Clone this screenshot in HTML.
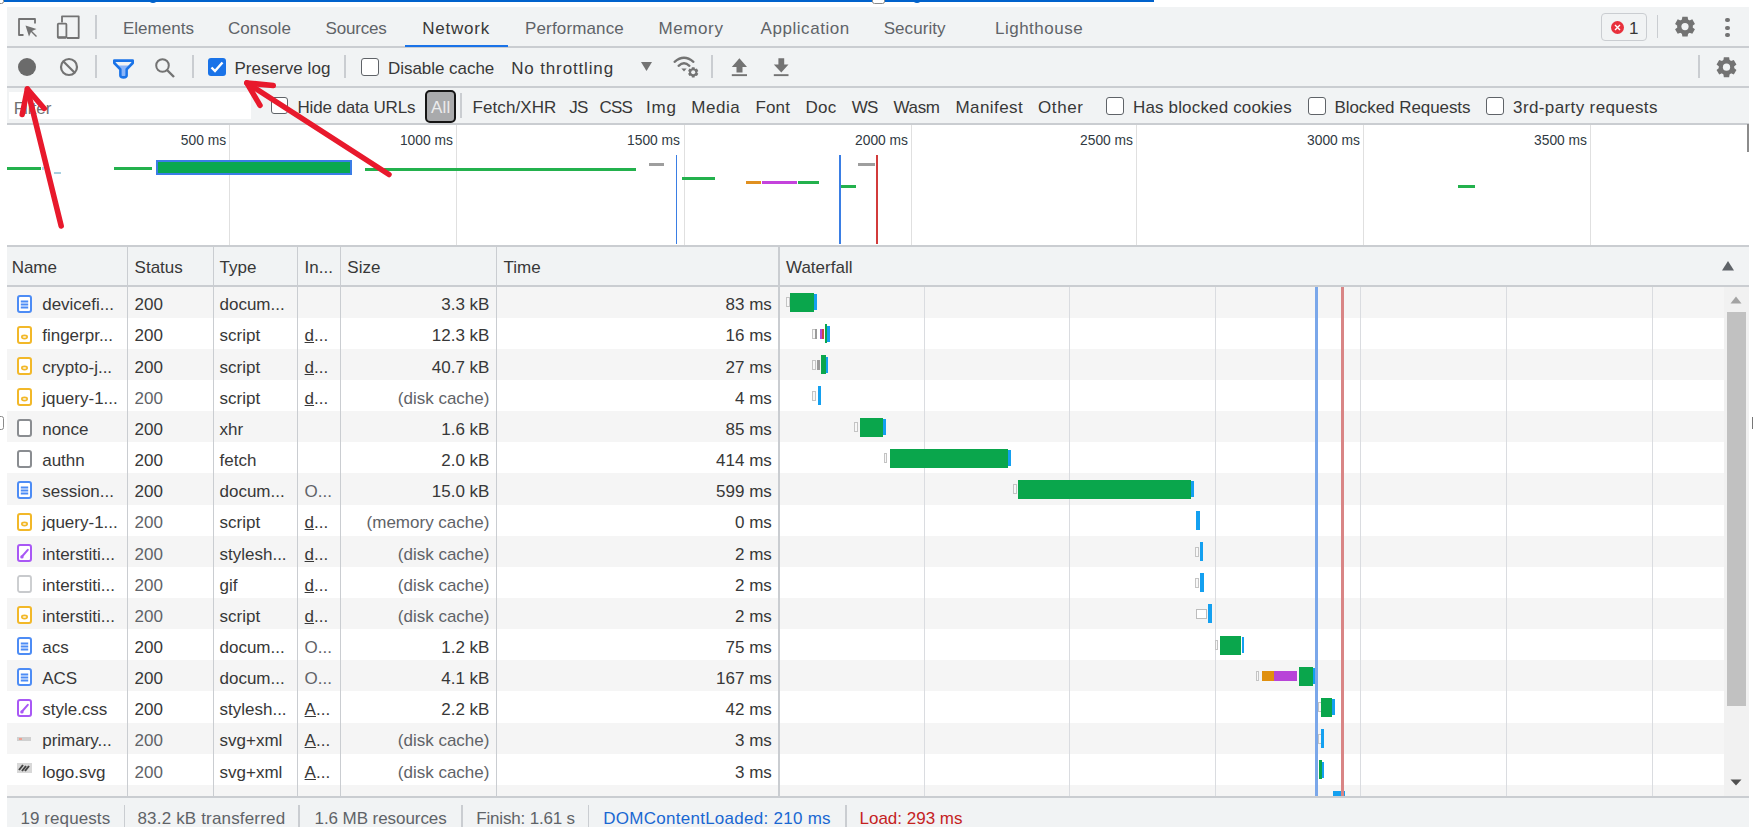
<!DOCTYPE html>
<html><head><meta charset="utf-8"><style>
html,body{margin:0;padding:0;background:#fff;width:1753px;height:827px;overflow:hidden;position:relative;font-family:"Liberation Sans", sans-serif;}
body>div{position:absolute;}
.t{white-space:nowrap;}
</style></head><body>
<div style="left:3.80px;top:0.00px;width:1150.00px;height:1.90px;background:#0062cc;"></div>
<div style="left:149.2px;top:-4px;width:8.2px;height:6.9px;border-radius:0 0 4px 4px;background:#0062cc"></div>
<div style="left:912.6px;top:-4px;width:8.5px;height:7px;border-radius:0 0 4px 4px;background:#0062cc"></div>
<div style="left:-6px;top:-6px;width:9.5px;height:9.5px;box-sizing:border-box;border:1.8px solid #8a8a8a;border-radius:2.5px;background:#fff"></div>
<div style="left:871.5px;top:-5px;width:13px;height:8.6px;box-sizing:border-box;border:1.8px solid #8a8a8a;border-radius:2.5px;background:#fff"></div>
<div style="left:-6px;top:416px;width:9.7px;height:13.6px;box-sizing:border-box;border:1.8px solid #8a8a8a;border-radius:2.5px;background:#fff"></div>
<div style="left:1752px;top:417px;width:3px;height:12px;background:#777"></div>
<div style="left:7.00px;top:7.00px;width:1742.00px;height:820.00px;background:#ffffff;"></div>
<div style="left:7.00px;top:7.00px;width:1742.00px;height:40.00px;background:#f1f3f4;"></div>
<div style="left:7.00px;top:46.00px;width:1742.00px;height:1.50px;background:#cacdd1;"></div>
<div style="left:7.00px;top:47.50px;width:1742.00px;height:39.00px;background:#f1f3f4;"></div>
<div style="left:7.00px;top:86.00px;width:1742.00px;height:1.50px;background:#cacdd1;"></div>
<div style="left:7.00px;top:87.50px;width:1742.00px;height:36.00px;background:#f1f3f4;"></div>
<div style="left:7.00px;top:123.00px;width:1742.00px;height:1.50px;background:#cacdd1;"></div>
<div style="left:229.20px;top:124.50px;width:1.00px;height:120.50px;background:#e0e0e0;"></div>
<div style="left:456.20px;top:124.50px;width:1.00px;height:120.50px;background:#e0e0e0;"></div>
<div style="left:683.50px;top:124.50px;width:1.00px;height:120.50px;background:#e0e0e0;"></div>
<div style="left:910.50px;top:124.50px;width:1.00px;height:120.50px;background:#e0e0e0;"></div>
<div style="left:1136.00px;top:124.50px;width:1.00px;height:120.50px;background:#e0e0e0;"></div>
<div style="left:1363.00px;top:124.50px;width:1.00px;height:120.50px;background:#e0e0e0;"></div>
<div style="left:1590.00px;top:124.50px;width:1.00px;height:120.50px;background:#e0e0e0;"></div>
<div style="left:7.00px;top:245.00px;width:1742.00px;height:1.50px;background:#cacdd1;"></div>
<div style="left:1747.40px;top:124.00px;width:1.70px;height:27.50px;background:#8c8c8c;"></div>
<div style="left:7.00px;top:246.50px;width:1742.00px;height:39.50px;background:#f1f3f4;"></div>
<div style="left:7.00px;top:285.50px;width:1742.00px;height:1.50px;background:#cacdd1;"></div>
<div class="t" style="top:20.11px;font-size:17px;line-height:17px;color:#5f6368;letter-spacing:0.029px;left:122.90px;">Elements</div>
<div class="t" style="top:20.11px;font-size:17px;line-height:17px;color:#5f6368;letter-spacing:0.117px;left:227.90px;">Console</div>
<div class="t" style="top:20.11px;font-size:17px;line-height:17px;color:#5f6368;letter-spacing:-0.167px;left:325.50px;">Sources</div>
<div class="t" style="top:20.11px;font-size:17px;line-height:17px;color:#383838;letter-spacing:0.767px;left:422.30px;">Network</div>
<div class="t" style="top:20.11px;font-size:17px;line-height:17px;color:#5f6368;letter-spacing:0.150px;left:525.00px;">Performance</div>
<div class="t" style="top:20.11px;font-size:17px;line-height:17px;color:#5f6368;letter-spacing:0.620px;left:658.40px;">Memory</div>
<div class="t" style="top:20.11px;font-size:17px;line-height:17px;color:#5f6368;letter-spacing:0.560px;left:760.50px;">Application</div>
<div class="t" style="top:20.11px;font-size:17px;line-height:17px;color:#5f6368;letter-spacing:0.057px;left:883.70px;">Security</div>
<div class="t" style="top:20.11px;font-size:17px;line-height:17px;color:#5f6368;letter-spacing:0.489px;left:995.00px;">Lighthouse</div>
<div style="left:405.40px;top:44.50px;width:102.30px;height:2.50px;background:#1a73e8;"></div>
<div style="left:95.25px;top:15.30px;width:1.50px;height:23.40px;background:#cacdd1;"></div>
<div style="left:1656.85px;top:15.30px;width:1.50px;height:23.10px;background:#cacdd1;"></div>
<div style="left:95.05px;top:55.00px;width:1.50px;height:23.00px;background:#cacdd1;"></div>
<div style="left:192.05px;top:55.00px;width:1.50px;height:23.00px;background:#cacdd1;"></div>
<div style="left:344.25px;top:55.00px;width:1.50px;height:23.00px;background:#cacdd1;"></div>
<div style="left:711.25px;top:55.00px;width:1.50px;height:23.00px;background:#cacdd1;"></div>
<div style="left:1698.45px;top:55.40px;width:1.50px;height:22.60px;background:#cacdd1;"></div>
<div style="left:460.25px;top:93.00px;width:1.50px;height:25.00px;background:#cacdd1;"></div>
<div class="t" style="top:60.11px;font-size:17px;line-height:17px;color:#383838;letter-spacing:0.036px;left:234.50px;">Preserve log</div>
<div class="t" style="top:60.11px;font-size:17px;line-height:17px;color:#383838;letter-spacing:-0.042px;left:388.00px;">Disable cache</div>
<div class="t" style="top:60.11px;font-size:17px;line-height:17px;color:#383838;letter-spacing:0.858px;left:511.20px;">No throttling</div>
<div style="left:8.50px;top:92.00px;width:242.50px;height:26.50px;background:#ffffff;"></div>
<div class="t" style="top:99.61px;font-size:17px;line-height:17px;color:#707070;letter-spacing:0.000px;left:13.70px;">Filter</div>
<div class="t" style="top:98.61px;font-size:17px;line-height:17px;color:#383838;letter-spacing:-0.154px;left:297.50px;">Hide data URLs</div>
<div class="t" style="top:98.61px;font-size:17px;line-height:17px;color:#383838;letter-spacing:0.088px;left:472.50px;">Fetch/XHR</div>
<div class="t" style="top:98.61px;font-size:17px;line-height:17px;color:#383838;letter-spacing:-0.800px;left:569.35px;">JS</div>
<div class="t" style="top:98.61px;font-size:17px;line-height:17px;color:#383838;letter-spacing:-0.800px;left:599.45px;">CSS</div>
<div class="t" style="top:98.61px;font-size:17px;line-height:17px;color:#383838;letter-spacing:0.850px;left:646.00px;">Img</div>
<div class="t" style="top:98.61px;font-size:17px;line-height:17px;color:#383838;letter-spacing:0.575px;left:691.20px;">Media</div>
<div class="t" style="top:98.61px;font-size:17px;line-height:17px;color:#383838;letter-spacing:0.133px;left:755.50px;">Font</div>
<div class="t" style="top:98.61px;font-size:17px;line-height:17px;color:#383838;letter-spacing:0.200px;left:805.50px;">Doc</div>
<div class="t" style="top:98.61px;font-size:17px;line-height:17px;color:#383838;letter-spacing:-0.800px;left:851.80px;">WS</div>
<div class="t" style="top:98.61px;font-size:17px;line-height:17px;color:#383838;letter-spacing:-0.333px;left:893.50px;">Wasm</div>
<div class="t" style="top:98.61px;font-size:17px;line-height:17px;color:#383838;letter-spacing:0.429px;left:955.50px;">Manifest</div>
<div class="t" style="top:98.61px;font-size:17px;line-height:17px;color:#383838;letter-spacing:0.650px;left:1037.90px;">Other</div>
<div style="left:425px;top:90px;width:30.5px;height:32.5px;box-sizing:border-box;border:2.8px solid #151515;border-radius:5px;background:#a9aaac"></div>
<div class="t" style="top:99.11px;font-size:17px;line-height:17px;color:#ececec;letter-spacing:0.250px;left:431.00px;">All</div>
<div class="t" style="top:98.61px;font-size:17px;line-height:17px;color:#383838;letter-spacing:0.156px;left:1133.00px;">Has blocked cookies</div>
<div class="t" style="top:98.61px;font-size:17px;line-height:17px;color:#383838;letter-spacing:-0.067px;left:1334.50px;">Blocked Requests</div>
<div class="t" style="top:98.61px;font-size:17px;line-height:17px;color:#383838;letter-spacing:0.376px;left:1513.10px;">3rd-party requests</div>
<div style="left:208px;top:58px;width:18px;height:18px;border-radius:3px;background:#1a73e8"></div>
<svg style="position:absolute;left:208px;top:58px" width="18" height="18" viewBox="0 0 18 18"><path d="M3.5 9.5 L7 13 L14.5 4.5" fill="none" stroke="#fff" stroke-width="2.4"/></svg>
<div style="left:361px;top:58px;width:17.5px;height:17.5px;box-sizing:border-box;border-radius:3px;border:1.5px solid #5f6368;background:#fff"></div>
<div style="left:270.5px;top:97px;width:17px;height:17px;box-sizing:border-box;border-radius:3px;border:1.5px solid #5f6368;background:#fff"></div>
<div style="left:1106px;top:97px;width:18px;height:18px;box-sizing:border-box;border-radius:3px;border:1.5px solid #5f6368;background:#fff"></div>
<div style="left:1308px;top:97px;width:18px;height:18px;box-sizing:border-box;border-radius:3px;border:1.5px solid #5f6368;background:#fff"></div>
<div style="left:1486px;top:97px;width:18px;height:18px;box-sizing:border-box;border-radius:3px;border:1.5px solid #5f6368;background:#fff"></div>
<div class="t" style="top:134.02px;font-size:13.8px;line-height:13.8px;color:#303942;right:1526.90px;text-align:right;">500 ms</div>
<div class="t" style="top:134.02px;font-size:13.8px;line-height:13.8px;color:#303942;right:1300.20px;text-align:right;">1000 ms</div>
<div class="t" style="top:134.02px;font-size:13.8px;line-height:13.8px;color:#303942;right:1073.00px;text-align:right;">1500 ms</div>
<div class="t" style="top:134.02px;font-size:13.8px;line-height:13.8px;color:#303942;right:845.00px;text-align:right;">2000 ms</div>
<div class="t" style="top:134.02px;font-size:13.8px;line-height:13.8px;color:#303942;right:620.00px;text-align:right;">2500 ms</div>
<div class="t" style="top:134.02px;font-size:13.8px;line-height:13.8px;color:#303942;right:393.00px;text-align:right;">3000 ms</div>
<div class="t" style="top:134.02px;font-size:13.8px;line-height:13.8px;color:#303942;right:166.00px;text-align:right;">3500 ms</div>
<div style="left:7.00px;top:167.00px;width:33.70px;height:3.00px;background:#23b14d;"></div>
<div style="left:41.50px;top:167.00px;width:2.00px;height:3.00px;background:#b0dcef;"></div>
<div style="left:54.00px;top:172.00px;width:7.00px;height:2.00px;background:#a8d0e0;"></div>
<div style="left:113.80px;top:167.00px;width:38.20px;height:3.00px;background:#23b14d;"></div>
<div style="left:156px;top:160px;width:196px;height:14.5px;box-sizing:border-box;border:2.8px solid #3a7de6;background:#0aa84f"></div>
<div style="left:365.00px;top:167.50px;width:270.50px;height:3.00px;background:#23b14d;"></div>
<div style="left:649.00px;top:162.50px;width:14.80px;height:3.00px;background:#9e9e9e;"></div>
<div style="left:682.00px;top:176.50px;width:33.00px;height:3.00px;background:#23b14d;"></div>
<div style="left:746.00px;top:180.50px;width:15.00px;height:3.00px;background:#e09020;"></div>
<div style="left:762.00px;top:180.50px;width:35.00px;height:3.00px;background:#c442dc;"></div>
<div style="left:798.00px;top:180.50px;width:21.00px;height:3.00px;background:#23b14d;"></div>
<div style="left:839.00px;top:184.90px;width:17.00px;height:3.00px;background:#23b14d;"></div>
<div style="left:857.60px;top:162.50px;width:17.40px;height:3.00px;background:#9e9e9e;"></div>
<div style="left:1458.00px;top:184.50px;width:17.00px;height:3.00px;background:#23b14d;"></div>
<div style="left:675.60px;top:155.00px;width:1.60px;height:89.00px;background:#3a7ee4;"></div>
<div style="left:839.20px;top:155.00px;width:1.60px;height:89.00px;background:#3a7ee4;"></div>
<div style="left:876.20px;top:155.00px;width:1.60px;height:89.00px;background:#d23b3b;"></div>
<div style="left:7.00px;top:286.50px;width:1717.00px;height:31.15px;background:#f5f5f5;"></div>
<div style="left:7.00px;top:348.80px;width:1717.00px;height:31.15px;background:#f5f5f5;"></div>
<div style="left:7.00px;top:411.10px;width:1717.00px;height:31.15px;background:#f5f5f5;"></div>
<div style="left:7.00px;top:473.40px;width:1717.00px;height:31.15px;background:#f5f5f5;"></div>
<div style="left:7.00px;top:535.70px;width:1717.00px;height:31.15px;background:#f5f5f5;"></div>
<div style="left:7.00px;top:598.00px;width:1717.00px;height:31.15px;background:#f5f5f5;"></div>
<div style="left:7.00px;top:660.30px;width:1717.00px;height:31.15px;background:#f5f5f5;"></div>
<div style="left:7.00px;top:722.60px;width:1717.00px;height:31.15px;background:#f5f5f5;"></div>
<div style="left:7.00px;top:784.90px;width:1717.00px;height:11.10px;background:#f5f5f5;"></div>
<div style="left:7.00px;top:285.30px;width:1742.00px;height:1.50px;background:#cacdd1;"></div>
<div style="left:126.55px;top:246.50px;width:1.50px;height:549.50px;background:#cacdd1;"></div>
<div style="left:212.55px;top:246.50px;width:1.50px;height:549.50px;background:#cacdd1;"></div>
<div style="left:296.55px;top:246.50px;width:1.50px;height:549.50px;background:#cacdd1;"></div>
<div style="left:339.95px;top:246.50px;width:1.50px;height:549.50px;background:#cacdd1;"></div>
<div style="left:495.75px;top:246.50px;width:1.50px;height:549.50px;background:#cacdd1;"></div>
<div style="left:778.05px;top:246.50px;width:1.50px;height:549.50px;background:#cacdd1;"></div>
<div style="left:923.50px;top:286.50px;width:1.00px;height:509.50px;background:#dadce0;"></div>
<div style="left:1069.00px;top:286.50px;width:1.00px;height:509.50px;background:#dadce0;"></div>
<div style="left:1214.50px;top:286.50px;width:1.00px;height:509.50px;background:#dadce0;"></div>
<div style="left:1360.30px;top:286.50px;width:1.00px;height:509.50px;background:#dadce0;"></div>
<div style="left:1506.00px;top:286.50px;width:1.00px;height:509.50px;background:#dadce0;"></div>
<div style="left:1651.50px;top:286.50px;width:1.00px;height:509.50px;background:#dadce0;"></div>
<div class="t" style="top:258.61px;font-size:17px;line-height:17px;color:#383838;left:11.65px;">Name</div>
<div class="t" style="top:258.61px;font-size:17px;line-height:17px;color:#383838;left:134.60px;">Status</div>
<div class="t" style="top:258.61px;font-size:17px;line-height:17px;color:#383838;left:219.50px;">Type</div>
<div class="t" style="top:258.61px;font-size:17px;line-height:17px;color:#383838;left:304.60px;">In...</div>
<div class="t" style="top:258.61px;font-size:17px;line-height:17px;color:#383838;left:347.30px;">Size</div>
<div class="t" style="top:258.61px;font-size:17px;line-height:17px;color:#383838;left:503.50px;">Time</div>
<div class="t" style="top:258.61px;font-size:17px;line-height:17px;color:#383838;left:786.00px;">Waterfall</div>
<svg style="position:absolute;left:1721px;top:260px" width="14" height="12" viewBox="0 0 14 12"><path d="M1 10.5 L7 1 L13 10.5 Z" fill="#5f6368"/></svg>
<svg style="position:absolute;left:16.5px;top:294.5px" width="15" height="18" viewBox="0 0 15 18"><rect x="1" y="1" width="13" height="16" rx="2" fill="#fff" stroke="#4d8cf5" stroke-width="2"/><path d="M3.8 6.6h7.4M3.8 9.5h7.4M3.8 12.4h7.4" stroke="#4d8cf5" stroke-width="2"/></svg>
<div class="t" style="top:296.31px;font-size:17px;line-height:17px;color:#383838;left:42.20px;">devicefi...</div>
<div class="t" style="top:296.31px;font-size:17px;line-height:17px;color:#383838;left:134.60px;">200</div>
<div class="t" style="top:296.31px;font-size:17px;line-height:17px;color:#383838;left:219.50px;">docum...</div>
<div class="t" style="top:296.31px;font-size:17px;line-height:17px;color:#383838;right:1263.60px;text-align:right;">3.3 kB</div>
<div class="t" style="top:296.31px;font-size:17px;line-height:17px;color:#383838;right:981.20px;text-align:right;">83 ms</div>
<svg style="position:absolute;left:16.5px;top:325.65px" width="15" height="18" viewBox="0 0 15 18"><rect x="1" y="1" width="13" height="16" rx="2" fill="#fff" stroke="#f2b829" stroke-width="2"/><ellipse cx="7.5" cy="11" rx="2.7" ry="1.6" fill="none" stroke="#f2b829" stroke-width="1.6"/></svg>
<div class="t" style="top:327.46px;font-size:17px;line-height:17px;color:#383838;left:42.20px;">fingerpr...</div>
<div class="t" style="top:327.46px;font-size:17px;line-height:17px;color:#383838;left:134.60px;">200</div>
<div class="t" style="top:327.46px;font-size:17px;line-height:17px;color:#383838;left:219.50px;">script</div>
<div class="t" style="top:327.46px;font-size:17px;line-height:17px;color:#383838;left:304.60px;"><u>d</u>...</div>
<div class="t" style="top:327.46px;font-size:17px;line-height:17px;color:#383838;right:1263.60px;text-align:right;">12.3 kB</div>
<div class="t" style="top:327.46px;font-size:17px;line-height:17px;color:#383838;right:981.20px;text-align:right;">16 ms</div>
<svg style="position:absolute;left:16.5px;top:356.8px" width="15" height="18" viewBox="0 0 15 18"><rect x="1" y="1" width="13" height="16" rx="2" fill="#fff" stroke="#f2b829" stroke-width="2"/><ellipse cx="7.5" cy="11" rx="2.7" ry="1.6" fill="none" stroke="#f2b829" stroke-width="1.6"/></svg>
<div class="t" style="top:358.61px;font-size:17px;line-height:17px;color:#383838;left:42.20px;">crypto-j...</div>
<div class="t" style="top:358.61px;font-size:17px;line-height:17px;color:#383838;left:134.60px;">200</div>
<div class="t" style="top:358.61px;font-size:17px;line-height:17px;color:#383838;left:219.50px;">script</div>
<div class="t" style="top:358.61px;font-size:17px;line-height:17px;color:#383838;left:304.60px;"><u>d</u>...</div>
<div class="t" style="top:358.61px;font-size:17px;line-height:17px;color:#383838;right:1263.60px;text-align:right;">40.7 kB</div>
<div class="t" style="top:358.61px;font-size:17px;line-height:17px;color:#383838;right:981.20px;text-align:right;">27 ms</div>
<svg style="position:absolute;left:16.5px;top:387.95px" width="15" height="18" viewBox="0 0 15 18"><rect x="1" y="1" width="13" height="16" rx="2" fill="#fff" stroke="#f2b829" stroke-width="2"/><ellipse cx="7.5" cy="11" rx="2.7" ry="1.6" fill="none" stroke="#f2b829" stroke-width="1.6"/></svg>
<div class="t" style="top:389.76px;font-size:17px;line-height:17px;color:#383838;left:42.20px;">jquery-1...</div>
<div class="t" style="top:389.76px;font-size:17px;line-height:17px;color:#5f6368;left:134.60px;">200</div>
<div class="t" style="top:389.76px;font-size:17px;line-height:17px;color:#383838;left:219.50px;">script</div>
<div class="t" style="top:389.76px;font-size:17px;line-height:17px;color:#383838;left:304.60px;"><u>d</u>...</div>
<div class="t" style="top:389.76px;font-size:17px;line-height:17px;color:#5f6368;right:1263.60px;text-align:right;">(disk cache)</div>
<div class="t" style="top:389.76px;font-size:17px;line-height:17px;color:#383838;right:981.20px;text-align:right;">4 ms</div>
<svg style="position:absolute;left:16.5px;top:419.1px" width="15" height="18" viewBox="0 0 15 18"><rect x="1" y="1" width="13" height="16" rx="2" fill="#fff" stroke="#8a8d91" stroke-width="2"/></svg>
<div class="t" style="top:420.91px;font-size:17px;line-height:17px;color:#383838;left:42.20px;">nonce</div>
<div class="t" style="top:420.91px;font-size:17px;line-height:17px;color:#383838;left:134.60px;">200</div>
<div class="t" style="top:420.91px;font-size:17px;line-height:17px;color:#383838;left:219.50px;">xhr</div>
<div class="t" style="top:420.91px;font-size:17px;line-height:17px;color:#383838;right:1263.60px;text-align:right;">1.6 kB</div>
<div class="t" style="top:420.91px;font-size:17px;line-height:17px;color:#383838;right:981.20px;text-align:right;">85 ms</div>
<svg style="position:absolute;left:16.5px;top:450.25px" width="15" height="18" viewBox="0 0 15 18"><rect x="1" y="1" width="13" height="16" rx="2" fill="#fff" stroke="#8a8d91" stroke-width="2"/></svg>
<div class="t" style="top:452.06px;font-size:17px;line-height:17px;color:#383838;left:42.20px;">authn</div>
<div class="t" style="top:452.06px;font-size:17px;line-height:17px;color:#383838;left:134.60px;">200</div>
<div class="t" style="top:452.06px;font-size:17px;line-height:17px;color:#383838;left:219.50px;">fetch</div>
<div class="t" style="top:452.06px;font-size:17px;line-height:17px;color:#383838;right:1263.60px;text-align:right;">2.0 kB</div>
<div class="t" style="top:452.06px;font-size:17px;line-height:17px;color:#383838;right:981.20px;text-align:right;">414 ms</div>
<svg style="position:absolute;left:16.5px;top:481.4px" width="15" height="18" viewBox="0 0 15 18"><rect x="1" y="1" width="13" height="16" rx="2" fill="#fff" stroke="#4d8cf5" stroke-width="2"/><path d="M3.8 6.6h7.4M3.8 9.5h7.4M3.8 12.4h7.4" stroke="#4d8cf5" stroke-width="2"/></svg>
<div class="t" style="top:483.21px;font-size:17px;line-height:17px;color:#383838;left:42.20px;">session...</div>
<div class="t" style="top:483.21px;font-size:17px;line-height:17px;color:#383838;left:134.60px;">200</div>
<div class="t" style="top:483.21px;font-size:17px;line-height:17px;color:#383838;left:219.50px;">docum...</div>
<div class="t" style="top:483.21px;font-size:17px;line-height:17px;color:#5f6368;left:304.60px;">O...</div>
<div class="t" style="top:483.21px;font-size:17px;line-height:17px;color:#383838;right:1263.60px;text-align:right;">15.0 kB</div>
<div class="t" style="top:483.21px;font-size:17px;line-height:17px;color:#383838;right:981.20px;text-align:right;">599 ms</div>
<svg style="position:absolute;left:16.5px;top:512.55px" width="15" height="18" viewBox="0 0 15 18"><rect x="1" y="1" width="13" height="16" rx="2" fill="#fff" stroke="#f2b829" stroke-width="2"/><ellipse cx="7.5" cy="11" rx="2.7" ry="1.6" fill="none" stroke="#f2b829" stroke-width="1.6"/></svg>
<div class="t" style="top:514.36px;font-size:17px;line-height:17px;color:#383838;left:42.20px;">jquery-1...</div>
<div class="t" style="top:514.36px;font-size:17px;line-height:17px;color:#5f6368;left:134.60px;">200</div>
<div class="t" style="top:514.36px;font-size:17px;line-height:17px;color:#383838;left:219.50px;">script</div>
<div class="t" style="top:514.36px;font-size:17px;line-height:17px;color:#383838;left:304.60px;"><u>d</u>...</div>
<div class="t" style="top:514.36px;font-size:17px;line-height:17px;color:#5f6368;right:1263.60px;text-align:right;">(memory cache)</div>
<div class="t" style="top:514.36px;font-size:17px;line-height:17px;color:#383838;right:981.20px;text-align:right;">0 ms</div>
<svg style="position:absolute;left:16.5px;top:543.7px" width="15" height="18" viewBox="0 0 15 18"><rect x="1" y="1" width="13" height="16" rx="2" fill="#fff" stroke="#a958f5" stroke-width="2"/><path d="M5 12.5 L10.8 5.8" stroke="#a958f5" stroke-width="2" stroke-linecap="round"/><circle cx="4.9" cy="12.9" r="1.7" fill="#a958f5"/></svg>
<div class="t" style="top:545.51px;font-size:17px;line-height:17px;color:#383838;left:42.20px;">interstiti...</div>
<div class="t" style="top:545.51px;font-size:17px;line-height:17px;color:#5f6368;left:134.60px;">200</div>
<div class="t" style="top:545.51px;font-size:17px;line-height:17px;color:#383838;left:219.50px;">stylesh...</div>
<div class="t" style="top:545.51px;font-size:17px;line-height:17px;color:#383838;left:304.60px;"><u>d</u>...</div>
<div class="t" style="top:545.51px;font-size:17px;line-height:17px;color:#5f6368;right:1263.60px;text-align:right;">(disk cache)</div>
<div class="t" style="top:545.51px;font-size:17px;line-height:17px;color:#383838;right:981.20px;text-align:right;">2 ms</div>
<svg style="position:absolute;left:16.5px;top:574.8499999999999px" width="15" height="18" viewBox="0 0 15 18"><rect x="1" y="1" width="13" height="16" rx="2" fill="#fff" stroke="#c8cacd" stroke-width="1.8"/></svg>
<div class="t" style="top:576.66px;font-size:17px;line-height:17px;color:#383838;left:42.20px;">interstiti...</div>
<div class="t" style="top:576.66px;font-size:17px;line-height:17px;color:#5f6368;left:134.60px;">200</div>
<div class="t" style="top:576.66px;font-size:17px;line-height:17px;color:#383838;left:219.50px;">gif</div>
<div class="t" style="top:576.66px;font-size:17px;line-height:17px;color:#383838;left:304.60px;"><u>d</u>...</div>
<div class="t" style="top:576.66px;font-size:17px;line-height:17px;color:#5f6368;right:1263.60px;text-align:right;">(disk cache)</div>
<div class="t" style="top:576.66px;font-size:17px;line-height:17px;color:#383838;right:981.20px;text-align:right;">2 ms</div>
<svg style="position:absolute;left:16.5px;top:606.0px" width="15" height="18" viewBox="0 0 15 18"><rect x="1" y="1" width="13" height="16" rx="2" fill="#fff" stroke="#f2b829" stroke-width="2"/><ellipse cx="7.5" cy="11" rx="2.7" ry="1.6" fill="none" stroke="#f2b829" stroke-width="1.6"/></svg>
<div class="t" style="top:607.81px;font-size:17px;line-height:17px;color:#383838;left:42.20px;">interstiti...</div>
<div class="t" style="top:607.81px;font-size:17px;line-height:17px;color:#5f6368;left:134.60px;">200</div>
<div class="t" style="top:607.81px;font-size:17px;line-height:17px;color:#383838;left:219.50px;">script</div>
<div class="t" style="top:607.81px;font-size:17px;line-height:17px;color:#383838;left:304.60px;"><u>d</u>...</div>
<div class="t" style="top:607.81px;font-size:17px;line-height:17px;color:#5f6368;right:1263.60px;text-align:right;">(disk cache)</div>
<div class="t" style="top:607.81px;font-size:17px;line-height:17px;color:#383838;right:981.20px;text-align:right;">2 ms</div>
<svg style="position:absolute;left:16.5px;top:637.15px" width="15" height="18" viewBox="0 0 15 18"><rect x="1" y="1" width="13" height="16" rx="2" fill="#fff" stroke="#4d8cf5" stroke-width="2"/><path d="M3.8 6.6h7.4M3.8 9.5h7.4M3.8 12.4h7.4" stroke="#4d8cf5" stroke-width="2"/></svg>
<div class="t" style="top:638.96px;font-size:17px;line-height:17px;color:#383838;left:42.20px;">acs</div>
<div class="t" style="top:638.96px;font-size:17px;line-height:17px;color:#383838;left:134.60px;">200</div>
<div class="t" style="top:638.96px;font-size:17px;line-height:17px;color:#383838;left:219.50px;">docum...</div>
<div class="t" style="top:638.96px;font-size:17px;line-height:17px;color:#5f6368;left:304.60px;">O...</div>
<div class="t" style="top:638.96px;font-size:17px;line-height:17px;color:#383838;right:1263.60px;text-align:right;">1.2 kB</div>
<div class="t" style="top:638.96px;font-size:17px;line-height:17px;color:#383838;right:981.20px;text-align:right;">75 ms</div>
<svg style="position:absolute;left:16.5px;top:668.3px" width="15" height="18" viewBox="0 0 15 18"><rect x="1" y="1" width="13" height="16" rx="2" fill="#fff" stroke="#4d8cf5" stroke-width="2"/><path d="M3.8 6.6h7.4M3.8 9.5h7.4M3.8 12.4h7.4" stroke="#4d8cf5" stroke-width="2"/></svg>
<div class="t" style="top:670.11px;font-size:17px;line-height:17px;color:#383838;left:42.20px;">ACS</div>
<div class="t" style="top:670.11px;font-size:17px;line-height:17px;color:#383838;left:134.60px;">200</div>
<div class="t" style="top:670.11px;font-size:17px;line-height:17px;color:#383838;left:219.50px;">docum...</div>
<div class="t" style="top:670.11px;font-size:17px;line-height:17px;color:#5f6368;left:304.60px;">O...</div>
<div class="t" style="top:670.11px;font-size:17px;line-height:17px;color:#383838;right:1263.60px;text-align:right;">4.1 kB</div>
<div class="t" style="top:670.11px;font-size:17px;line-height:17px;color:#383838;right:981.20px;text-align:right;">167 ms</div>
<svg style="position:absolute;left:16.5px;top:699.45px" width="15" height="18" viewBox="0 0 15 18"><rect x="1" y="1" width="13" height="16" rx="2" fill="#fff" stroke="#a958f5" stroke-width="2"/><path d="M5 12.5 L10.8 5.8" stroke="#a958f5" stroke-width="2" stroke-linecap="round"/><circle cx="4.9" cy="12.9" r="1.7" fill="#a958f5"/></svg>
<div class="t" style="top:701.26px;font-size:17px;line-height:17px;color:#383838;left:42.20px;">style.css</div>
<div class="t" style="top:701.26px;font-size:17px;line-height:17px;color:#383838;left:134.60px;">200</div>
<div class="t" style="top:701.26px;font-size:17px;line-height:17px;color:#383838;left:219.50px;">stylesh...</div>
<div class="t" style="top:701.26px;font-size:17px;line-height:17px;color:#383838;left:304.60px;"><u>A</u>...</div>
<div class="t" style="top:701.26px;font-size:17px;line-height:17px;color:#383838;right:1263.60px;text-align:right;">2.2 kB</div>
<div class="t" style="top:701.26px;font-size:17px;line-height:17px;color:#383838;right:981.20px;text-align:right;">42 ms</div>
<div style="left:16.5px;top:737.0999999999999px;width:14.5px;height:4px;background:#d0d0d0"></div>
<div style="left:18.5px;top:738.0999999999999px;width:3px;height:2px;background:#f0a090"></div>
<div class="t" style="top:732.41px;font-size:17px;line-height:17px;color:#383838;left:42.20px;">primary...</div>
<div class="t" style="top:732.41px;font-size:17px;line-height:17px;color:#5f6368;left:134.60px;">200</div>
<div class="t" style="top:732.41px;font-size:17px;line-height:17px;color:#383838;left:219.50px;">svg+xml</div>
<div class="t" style="top:732.41px;font-size:17px;line-height:17px;color:#383838;left:304.60px;"><u>A</u>...</div>
<div class="t" style="top:732.41px;font-size:17px;line-height:17px;color:#5f6368;right:1263.60px;text-align:right;">(disk cache)</div>
<div class="t" style="top:732.41px;font-size:17px;line-height:17px;color:#383838;right:981.20px;text-align:right;">3 ms</div>
<svg style="position:absolute;left:16.5px;top:762.75px" width="15" height="10" viewBox="0 0 15 10"><rect x="0" y="0" width="15" height="10" fill="#d8d8d8"/><path d="M2 7 L6 2 M5 8 L9 3 M8 8 L12 3" stroke="#444" stroke-width="2"/></svg>
<div class="t" style="top:763.56px;font-size:17px;line-height:17px;color:#383838;left:42.20px;">logo.svg</div>
<div class="t" style="top:763.56px;font-size:17px;line-height:17px;color:#5f6368;left:134.60px;">200</div>
<div class="t" style="top:763.56px;font-size:17px;line-height:17px;color:#383838;left:219.50px;">svg+xml</div>
<div class="t" style="top:763.56px;font-size:17px;line-height:17px;color:#383838;left:304.60px;"><u>A</u>...</div>
<div class="t" style="top:763.56px;font-size:17px;line-height:17px;color:#5f6368;right:1263.60px;text-align:right;">(disk cache)</div>
<div class="t" style="top:763.56px;font-size:17px;line-height:17px;color:#383838;right:981.20px;text-align:right;">3 ms</div>
<div style="left:786.00px;top:297.40px;width:3.50px;height:10px;box-sizing:border-box;border:1px solid #c4c4c4;background:#f8f8f8"></div>
<div style="left:789.90px;top:292.90px;width:24.00px;height:19.00px;background:#0aa64c;"></div>
<div style="left:813.90px;top:294.40px;width:3.10px;height:16.00px;background:#14a0f0;"></div>
<div style="left:812.00px;top:328.55px;width:3.50px;height:10px;box-sizing:border-box;border:1px solid #c4c4c4;background:#f8f8f8"></div>
<div style="left:815.00px;top:328.55px;width:2.00px;height:10.00px;background:#9a9a9a;"></div>
<div style="left:819.50px;top:328.55px;width:2.50px;height:10.00px;background:#b844d8;"></div>
<div style="left:822.00px;top:328.55px;width:2.00px;height:10.00px;background:#c44;"></div>
<div style="left:825.00px;top:324.05px;width:2.00px;height:19.00px;background:#0aa64c;"></div>
<div style="left:827.00px;top:325.55px;width:3.00px;height:16.00px;background:#14a0f0;"></div>
<div style="left:812.00px;top:359.70px;width:4.00px;height:10px;box-sizing:border-box;border:1px solid #c4c4c4;background:#f8f8f8"></div>
<div style="left:817.00px;top:359.70px;width:3.00px;height:10.00px;background:#9a9a9a;"></div>
<div style="left:821.00px;top:355.20px;width:4.60px;height:19.00px;background:#0aa64c;"></div>
<div style="left:825.60px;top:356.70px;width:2.80px;height:16.00px;background:#14a0f0;"></div>
<div style="left:812.00px;top:390.85px;width:3.50px;height:10px;box-sizing:border-box;border:1px solid #c4c4c4;background:#f8f8f8"></div>
<div style="left:818.00px;top:386.35px;width:3.00px;height:19.00px;background:#14a0f0;"></div>
<div style="left:854.00px;top:422.00px;width:3.50px;height:10px;box-sizing:border-box;border:1px solid #c4c4c4;background:#f8f8f8"></div>
<div style="left:859.60px;top:417.50px;width:23.70px;height:19.00px;background:#0aa64c;"></div>
<div style="left:883.30px;top:419.00px;width:3.10px;height:16.00px;background:#14a0f0;"></div>
<div style="left:883.60px;top:453.15px;width:3.50px;height:10px;box-sizing:border-box;border:1px solid #c4c4c4;background:#f8f8f8"></div>
<div style="left:889.50px;top:448.65px;width:118.70px;height:19.00px;background:#0aa64c;"></div>
<div style="left:1008.20px;top:450.15px;width:2.80px;height:16.00px;background:#14a0f0;"></div>
<div style="left:1013.00px;top:484.30px;width:3.50px;height:10px;box-sizing:border-box;border:1px solid #c4c4c4;background:#f8f8f8"></div>
<div style="left:1018.00px;top:479.80px;width:172.80px;height:19.00px;background:#0aa64c;"></div>
<div style="left:1190.80px;top:481.30px;width:2.80px;height:16.00px;background:#14a0f0;"></div>
<div style="left:1196.40px;top:510.95px;width:3.20px;height:19.00px;background:#14a0f0;"></div>
<div style="left:1195.00px;top:546.60px;width:3.50px;height:10px;box-sizing:border-box;border:1px solid #c4c4c4;background:#f8f8f8"></div>
<div style="left:1199.60px;top:542.10px;width:3.20px;height:19.00px;background:#14a0f0;"></div>
<div style="left:1195.00px;top:577.75px;width:3.50px;height:10px;box-sizing:border-box;border:1px solid #c4c4c4;background:#f8f8f8"></div>
<div style="left:1200.40px;top:573.25px;width:4.00px;height:19.00px;background:#14a0f0;"></div>
<div style="left:1208.40px;top:604.40px;width:3.20px;height:19.00px;background:#14a0f0;"></div>
<div style="left:1214.80px;top:640.05px;width:3.50px;height:10px;box-sizing:border-box;border:1px solid #c4c4c4;background:#f8f8f8"></div>
<div style="left:1220.40px;top:635.55px;width:21.10px;height:19.00px;background:#0aa64c;"></div>
<div style="left:1241.50px;top:637.05px;width:2.80px;height:16.00px;background:#14a0f0;"></div>
<div style="left:1255.50px;top:671.20px;width:3.50px;height:10px;box-sizing:border-box;border:1px solid #c4c4c4;background:#f8f8f8"></div>
<div style="left:1262.30px;top:671.20px;width:11.60px;height:10.00px;background:#e0900f;"></div>
<div style="left:1273.90px;top:671.20px;width:23.50px;height:10.00px;background:#b844d8;"></div>
<div style="left:1299.40px;top:666.70px;width:14.00px;height:19.00px;background:#0aa64c;"></div>
<div style="left:1313.40px;top:668.20px;width:2.60px;height:16.00px;background:#14a0f0;"></div>
<div style="left:1318.00px;top:702.35px;width:3.50px;height:10px;box-sizing:border-box;border:1px solid #c4c4c4;background:#f8f8f8"></div>
<div style="left:1320.50px;top:697.85px;width:11.50px;height:19.00px;background:#0aa64c;"></div>
<div style="left:1332.00px;top:699.35px;width:2.50px;height:16.00px;background:#14a0f0;"></div>
<div style="left:1318.00px;top:733.50px;width:3.50px;height:10px;box-sizing:border-box;border:1px solid #c4c4c4;background:#f8f8f8"></div>
<div style="left:1320.50px;top:729.00px;width:3.50px;height:19.00px;background:#14a0f0;"></div>
<div style="left:1319.40px;top:760.15px;width:2.30px;height:19.00px;background:#0aa64c;"></div>
<div style="left:1321.70px;top:761.65px;width:2.30px;height:16.00px;background:#14a0f0;"></div>
<div style="left:1195.6px;top:608.9px;width:11px;height:10.5px;box-sizing:border-box;border:1.5px solid #bdbdbd;background:#fff"></div>
<div style="left:1333.00px;top:791.00px;width:12.00px;height:5.00px;background:#14a0f0;"></div>
<div style="left:1315.30px;top:286.50px;width:3.00px;height:509.50px;background:#7aa7ea;"></div>
<div style="left:1340.70px;top:286.50px;width:3.00px;height:509.50px;background:#d98585;"></div>
<div style="left:1724.00px;top:286.50px;width:25.00px;height:509.50px;background:#f1f1f1;"></div>
<div style="left:1727.00px;top:312.00px;width:19.00px;height:394.20px;background:#c1c1c1;"></div>
<svg style="position:absolute;left:1730px;top:296px" width="12" height="8" viewBox="0 0 12 8"><path d="M0.5 7.5 L6 0.5 L11.5 7.5Z" fill="#a3a3a3"/></svg>
<svg style="position:absolute;left:1730px;top:779px" width="12" height="7" viewBox="0 0 12 7"><path d="M0.5 0.5 L6 6.5 L11.5 0.5Z" fill="#505050"/></svg>
<div style="left:7.00px;top:796.00px;width:1742.00px;height:1.50px;background:#cacdd1;"></div>
<div style="left:7.00px;top:797.50px;width:1742.00px;height:31.00px;background:#f1f3f4;"></div>
<div class="t" style="top:809.91px;font-size:17px;line-height:17px;color:#5f6368;letter-spacing:0.090px;left:20.40px;">19 requests</div>
<div class="t" style="top:809.91px;font-size:17px;line-height:17px;color:#5f6368;letter-spacing:0.167px;left:137.50px;">83.2 kB transferred</div>
<div class="t" style="top:809.91px;font-size:17px;line-height:17px;color:#5f6368;letter-spacing:-0.067px;left:314.50px;">1.6 MB resources</div>
<div class="t" style="top:809.91px;font-size:17px;line-height:17px;color:#5f6368;letter-spacing:-0.169px;left:476.20px;">Finish: 1.61 s</div>
<div class="t" style="top:809.91px;font-size:17px;line-height:17px;color:#1967d2;letter-spacing:0.274px;left:603.20px;">DOMContentLoaded: 210 ms</div>
<div class="t" style="top:809.91px;font-size:17px;line-height:17px;color:#c5221f;letter-spacing:0.000px;left:859.50px;">Load: 293 ms</div>
<div style="left:123.65px;top:805.00px;width:1.50px;height:22.00px;background:#cacdd1;"></div>
<div style="left:298.25px;top:805.00px;width:1.50px;height:22.00px;background:#cacdd1;"></div>
<div style="left:461.25px;top:805.00px;width:1.50px;height:22.00px;background:#cacdd1;"></div>
<div style="left:587.95px;top:805.00px;width:1.50px;height:22.00px;background:#cacdd1;"></div>
<div style="left:845.25px;top:805.00px;width:1.50px;height:22.00px;background:#cacdd1;"></div>
<svg style="position:absolute;left:16px;top:16px" width="24" height="24" viewBox="0 0 24 24"><path d="M7.5 19 H3 V3 H19 V7.5" fill="none" stroke="#737373" stroke-width="1.8" stroke-linejoin="round"/><path d="M9.5 9.5 L20.5 13 L16 15 L21 20 L20 21 L15 16 L13 20.5 Z" fill="#737373"/></svg>
<svg style="position:absolute;left:55px;top:14px" width="26" height="26" viewBox="0 0 26 26"><path d="M7 8.5 V2.3 H23.7 V24 H12" fill="none" stroke="#737373" stroke-width="1.8" stroke-linejoin="round"/><rect x="2.8" y="9.6" width="8.6" height="14.3" rx="0.8" fill="none" stroke="#737373" stroke-width="1.8"/><rect x="2.8" y="22.2" width="8.6" height="2" fill="#737373"/></svg>
<div style="left:18px;top:58px;width:18px;height:18px;border-radius:50%;background:#6b6b6b"></div>
<svg style="position:absolute;left:59px;top:57px" width="20" height="20" viewBox="0 0 20 20"><circle cx="10" cy="10" r="8" fill="none" stroke="#737373" stroke-width="2.2"/><path d="M4.5 4.5 L15.5 15.5" stroke="#737373" stroke-width="2.2"/></svg>
<svg style="position:absolute;left:112px;top:58px" width="23" height="21" viewBox="0 0 23 21"><path d="M5.2 7.6 H17.8 L13.6 11.6 V18.3 H9.4 V11.6 Z" fill="#8ab4f8"/><path d="M2.3 2.6 H20.7 V5 L14.6 11.4 V17.6 Q14.6 19.4 11.5 19.4 Q8.4 19.4 8.4 17.6 V11.4 L2.3 5 Z" fill="none" stroke="#1a73e8" stroke-width="2.6" stroke-linejoin="round"/></svg>
<svg style="position:absolute;left:154px;top:57px" width="22" height="22" viewBox="0 0 22 22"><circle cx="8.5" cy="8.5" r="6.3" fill="none" stroke="#737373" stroke-width="2"/><path d="M13 13 L20 20" stroke="#737373" stroke-width="2.4"/></svg>
<svg style="position:absolute;left:640px;top:61px" width="13" height="11" viewBox="0 0 13 11"><path d="M1 1 L12 1 L6.5 10 Z" fill="#737373"/></svg>
<svg style="position:absolute;left:0;top:0" width="1753" height="100" viewBox="0 0 1753 100"><path d="M674.6 61.8 Q684 53.6 693.4 61.8" fill="none" stroke="#737373" stroke-width="2.3" stroke-linecap="round"/><path d="M678.6 65.8 Q684 60.6 689.4 65.8" fill="none" stroke="#737373" stroke-width="2.3" stroke-linecap="round"/><path d="M681.4 68.6 H686.6 L684 71.6 Z" fill="#737373"/><path d="M731.8 67 L739.4 58.2 L747 67 H742.5 V72.5 H736.5 V67 Z" fill="#737373"/><rect x="731.8" y="74.2" width="15.2" height="1.9" fill="#737373"/><path d="M778.4 58.2 H784.2 V64.6 H788.5 L781.3 72.6 L773.8 64.6 H778.4 Z" fill="#737373"/><rect x="773.8" y="74.2" width="14.7" height="1.9" fill="#737373"/></svg>
<svg style="position:absolute;left:0;top:0" width="1753" height="100" viewBox="0 0 1753 100"><path d="M1692.58 27.39 L1694.94 29.28 L1692.30 33.87 L1689.47 32.77 L1688.11 33.56 L1687.65 36.55 L1682.35 36.55 L1681.89 33.56 L1680.53 32.77 L1677.70 33.87 L1675.06 29.28 L1677.42 27.39 L1677.42 25.81 L1675.06 23.92 L1677.70 19.33 L1680.53 20.43 L1681.89 19.64 L1682.35 16.65 L1687.65 16.65 L1688.11 19.64 L1689.47 20.43 L1692.30 19.33 L1694.94 23.92 L1692.58 25.81Z" fill="#737373"/><circle cx="1685" cy="26.6" r="7.62" fill="#737373"/><circle cx="1685" cy="26.6" r="3.60" fill="#f1f3f4"/></svg>
<svg style="position:absolute;left:0;top:0" width="1753" height="100" viewBox="0 0 1753 100"><path d="M1734.08 67.99 L1736.44 69.88 L1733.80 74.47 L1730.97 73.37 L1729.61 74.16 L1729.15 77.15 L1723.85 77.15 L1723.39 74.16 L1722.03 73.37 L1719.20 74.47 L1716.56 69.88 L1718.92 67.99 L1718.92 66.41 L1716.56 64.52 L1719.20 59.93 L1722.03 61.03 L1723.39 60.24 L1723.85 57.25 L1729.15 57.25 L1729.61 60.24 L1730.97 61.03 L1733.80 59.93 L1736.44 64.52 L1734.08 66.41Z" fill="#737373"/><circle cx="1726.5" cy="67.2" r="7.62" fill="#737373"/><circle cx="1726.5" cy="67.2" r="3.60" fill="#f1f3f4"/></svg>
<svg style="position:absolute;left:0;top:0" width="1753" height="100" viewBox="0 0 1753 100"><path d="M697.10 72.71 L698.32 73.68 L696.95 76.04 L695.50 75.48 L694.80 75.88 L694.56 77.42 L691.84 77.42 L691.60 75.88 L690.90 75.48 L689.45 76.04 L688.08 73.68 L689.30 72.71 L689.30 71.89 L688.08 70.92 L689.45 68.56 L690.90 69.12 L691.60 68.72 L691.84 67.18 L694.56 67.18 L694.80 68.72 L695.50 69.12 L696.95 68.56 L698.32 70.92 L697.10 71.89Z" fill="#737373"/><circle cx="693.2" cy="72.3" r="3.92" fill="#737373"/><circle cx="693.2" cy="72.3" r="2.01" fill="#f1f3f4"/></svg>
<div style="left:1725.4px;top:18.099999999999998px;width:4.2px;height:4.2px;border-radius:50%;background:#737373"></div>
<div style="left:1725.4px;top:25.5px;width:4.2px;height:4.2px;border-radius:50%;background:#737373"></div>
<div style="left:1725.4px;top:33.0px;width:4.2px;height:4.2px;border-radius:50%;background:#737373"></div>
<div style="left:1601px;top:12.7px;width:46.3px;height:28.3px;box-sizing:border-box;border:1.5px solid #cacdd1;border-radius:4px"></div>
<div style="left:1610.6px;top:20.7px;width:13.8px;height:13.8px;border-radius:50%;background:#e8303c"></div>
<svg style="position:absolute;left:1613px;top:23px" width="9" height="9" viewBox="0 0 9 9"><path d="M2 2 L7 7 M7 2 L2 7" stroke="#fff" stroke-width="1.4"/></svg>
<div class="t" style="top:19.91px;font-size:17px;line-height:17px;color:#383838;left:1629.00px;">1</div>
<svg style="position:absolute;left:0;top:0" width="1753" height="827" viewBox="0 0 1753 827">
<g fill="none" stroke="#e8192c" stroke-width="5.5" stroke-linecap="round" stroke-linejoin="round">
<path d="M61.2 226 L27.4 89"/><path d="M22.2 114.5 L27.4 89 L44.2 108.5"/>
<path d="M389 174.5 L246.8 82.9"/><path d="M273.3 85.6 L246.8 82.9 L260 105.3"/>
</g></svg>
</body></html>
